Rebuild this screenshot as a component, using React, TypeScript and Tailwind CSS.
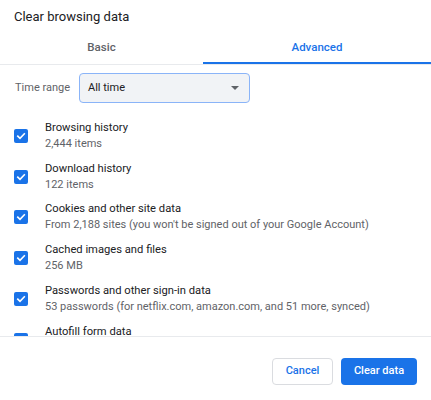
import React from "react";

const items = [
  { t: "Browsing history", s: "2,444 items" },
  { t: "Download history", s: "122 items" },
  { t: "Cookies and other site data", s: "From 2,188 sites (you won't be signed out of your Google Account)" },
  { t: "Cached images and files", s: "256 MB" },
  { t: "Passwords and other sign-in data", s: "53 passwords (for netflix.com, amazon.com, and 51 more, synced)" },
  { t: "Autofill form data", s: "" },
];

function Check() {
  return (
    <div className="w-[14px] h-[14px] rounded-[2px] bg-[#1a73e8] flex items-center justify-center shrink-0">
      <svg width="10" height="10" viewBox="0 0 10 10" fill="none">
        <path d="M1.8 5.2 L4 7.3 L8.3 2.8" stroke="white" strokeWidth="1.6" strokeLinecap="square" />
      </svg>
    </div>
  );
}

export default function App() {
  return (
    <div className="w-[431px] h-[400px] bg-white flex flex-col overflow-hidden text-[#202124]" style={{ fontFamily: "Roboto, 'Liberation Sans', sans-serif" }}>
      <div className="h-[34px] flex items-center px-[14px] text-[13px]">Clear browsing data</div>
      <div className="flex h-[31px] border-b border-[#e8eaed] text-[11.5px] font-medium">
        <div className="w-[203px] flex items-center justify-center text-[#5f6368] pb-[2px]">Basic</div>
        <div className="flex-1 flex items-center justify-center text-[#1a73e8] border-b-2 border-[#1a73e8]">Advanced</div>
      </div>
      <div className="h-[272px] overflow-hidden border-b border-[#e8eaed]">
        <div className="flex items-center mt-[8px] h-[30px]">
          <div className="w-[79px] pl-[15px] text-[11px] text-[#5f6368]">Time range</div>
          <div className="w-[171px] h-[30px] rounded-[4px] border border-[#8ab4f8] bg-[#f1f3f6] flex items-center justify-between pl-[8px] pr-[10px] text-[11px] text-[#202124]">
            <span>All time</span>
            <span className="w-0 h-0 border-l-[4px] border-r-[4px] border-t-[4px] border-l-transparent border-r-transparent border-t-[#5f6368]" />
          </div>
        </div>
        <div className="mt-[12.6px]">
          {items.map((it) => (
            <div key={it.t} className="h-[40.75px] flex items-center">
              <div className="w-[45px] pl-[14px]">
                <Check />
              </div>
              <div className="flex flex-col">
                <div className="text-[11.2px] leading-[16px] text-[#202124]">{it.t}</div>
                {it.s ? (
                  <div className="text-[11px] leading-[16px] text-[#5f6368]">{it.s}</div>
                ) : (
                  <div className="h-[16px]" />
                )}
              </div>
            </div>
          ))}
        </div>
      </div>
      <div className="flex justify-end gap-[8px] pt-[21px] pr-[14px]">
        <button className="w-[61px] h-[27px] rounded-[4px] border border-[#dadce0] bg-white text-[#1a73e8] text-[11px] font-medium">Cancel</button>
        <button className="w-[76px] h-[27px] rounded-[4px] bg-[#1a73e8] text-white text-[11px] font-medium">Clear data</button>
      </div>
    </div>
  );
}
